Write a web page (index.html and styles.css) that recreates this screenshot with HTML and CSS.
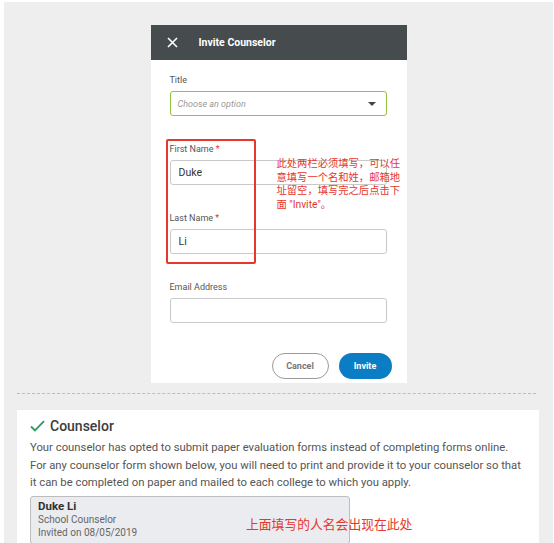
FILE: index.html
```html
<!DOCTYPE html>
<html lang="en">
<head>
    <meta charset="UTF-8">
    <meta name="viewport" content="width=device-width, initial-scale=1.0">
    <title>Invite Counselor</title>
    <link rel="stylesheet" href="styles.css">
</head>
<body>
    <div class="page">
        <div class="modal">
            <div class="modal-header">
                <svg class="close-icon" width="11" height="11" viewBox="0 0 11 11">
                    <path d="M1 1 L10 10 M10 1 L1 10" stroke="#fff" stroke-width="1.6" fill="none"/>
                </svg>
                <span class="modal-title">Invite Counselor</span>
            </div>
            <form class="modal-body">
                <div class="form-group">
                    <label>Title</label>
                    <div class="select">
                        <span class="placeholder">Choose an option</span>
                        <span class="caret"></span>
                    </div>
                </div>
                <div class="form-group">
                    <label>First Name <span class="req">*</span></label>
                    <div class="input">Duke</div>
                </div>
                <div class="form-group">
                    <label>Last Name <span class="req">*</span></label>
                    <div class="input">Li</div>
                </div>
                <div class="form-group">
                    <label>Email Address</label>
                    <div class="input"></div>
                </div>
                <div class="actions">
                    <button type="button" class="btn btn-cancel">Cancel</button>
                    <button type="button" class="btn btn-invite">Invite</button>
                </div>
            </form>

            <!-- annotation overlay -->
            <div class="mark-box"></div>
            <div class="note">此处两栏必须填写，可以任<br>意填写一个名和姓，邮箱地<br>址留空，填写完之后点击下<br>面 "Invite"。</div>
        </div>

        <div class="divider"></div>

        <div class="card">
            <div class="card-title">
                <svg width="15" height="12" viewBox="0 0 15 12">
                    <path d="M1 6.5 L5 10.5 L14 1.2" stroke="#2f9a62" stroke-width="1.8" fill="none"/>
                </svg>
                <span>Counselor</span>
            </div>
            <p class="card-text">Your counselor has opted to submit paper evaluation forms instead of completing forms online. For any counselor form shown below, you will need to print and provide it to your counselor so that it can be completed on paper and mailed to each college to which you apply.</p>
            <div class="counselor">
                <div class="c-name">Duke Li</div>
                <div class="c-line">School Counselor</div>
                <div class="c-line">Invited on 08/05/2019</div>
            </div>
            <div class="note-bottom">上面填写的人名会出现在此处</div>
        </div>
    </div>
</body>
</html>
```

FILE: styles.css
```css
/* General */
body {
    margin: 0;
    padding: 0;
    background: #fff;
    font-family: Roboto, "Noto Sans CJK SC", sans-serif;
}

.page {
    margin: 2px 1px 0 4px;
    padding-top: 23px;
    height: 541px;
    box-sizing: border-box;
    background: #eeeeee;
    overflow: hidden;
}

/* Modal */
.modal {
    position: relative;
    width: 256px;
    margin: 0 auto;
    background: #fff;
}

.modal-header {
    display: flex;
    align-items: center;
    height: 35px;
    padding-left: 16px;
    background: #464b4d;
}

.close-icon {
    margin-right: 21px;
}

.modal-title {
    color: #fff;
    font-size: 10.5px;
    font-weight: 700;
}

.modal-body {
    padding: 14px 20px 4px 19px;
    margin: 0;
}

.form-group {
    margin-bottom: 27px;
}

.form-group label {
    display: block;
    height: 12px;
    line-height: 12px;
    margin-bottom: 5px;
    font-size: 9px;
    color: #555;
}

.req {
    color: #e0342b;
}

.select,
.input {
    display: flex;
    align-items: center;
    height: 25px;
    box-sizing: border-box;
    padding: 0 8px;
    border: 1px solid #c9c9c9;
    border-radius: 3px;
    font-size: 10.5px;
    color: #333;
}

.select {
    justify-content: space-between;
    padding: 0 8px 0 7px;
    border: 1.5px solid #95c23f;
}

.placeholder {
    font-style: italic;
    font-size: 9px;
    color: #9a9a9a;
}

.caret {
    width: 0;
    height: 0;
    margin-right: 2px;
    border-left: 4px solid transparent;
    border-right: 4px solid transparent;
    border-top: 4px solid #444;
}

.actions {
    display: flex;
    justify-content: flex-end;
    gap: 10px;
    margin-top: 30px;
    margin-right: -5px;
}

.btn {
    height: 26px;
    border-radius: 13px;
    font-family: Roboto, sans-serif;
    font-size: 9px;
    font-weight: 700;
    cursor: pointer;
}

.btn-cancel {
    width: 57px;
    background: #fff;
    border: 1.5px solid #9a9a9a;
    color: #777;
}

.btn-invite {
    width: 53px;
    background: #0b7dc4;
    border: none;
    color: #fff;
}

/* Annotations */
.mark-box {
    position: absolute;
    left: 15px;
    top: 114px;
    width: 90px;
    height: 125px;
    box-sizing: border-box;
    border: 2px solid #e5372c;
    border-radius: 2px;
}

.note {
    position: absolute;
    left: 126px;
    top: 132px;
    font-size: 10.3px;
    line-height: 13.5px;
    color: #e5372c;
    white-space: nowrap;
}

/* Divider */
.divider {
    margin: 10px 17px 0 13px;
    border-top: 1px dashed #bdbdbd;
}

/* Card */
.card {
    position: relative;
    margin: 16px 14px 0 13px;
    padding: 6px 17px 0 13px;
    height: 140px;
    background: #fff;
}

.card-title {
    display: flex;
    align-items: center;
    gap: 5px;
    height: 20px;
    font-size: 14px;
    font-weight: 500;
    color: #3a3d3f;
}

.card-text {
    margin: 3px 0 4px;
    font-size: 11.3px;
    line-height: 17.5px;
    color: #555;
}

.counselor {
    width: 320px;
    padding: 2px 7px 4px;
    box-sizing: border-box;
    background: #ebecef;
    border: 1px solid #bdbdbd;
    border-radius: 3px;
}

.c-name {
    font-size: 11.5px;
    font-weight: 700;
    line-height: 14px;
    color: #333;
}

.c-line {
    font-size: 10px;
    line-height: 13px;
    color: #666;
}

.note-bottom {
    position: absolute;
    left: 229px;
    top: 104px;
    font-size: 12.8px;
    color: #e5372c;
}
```
